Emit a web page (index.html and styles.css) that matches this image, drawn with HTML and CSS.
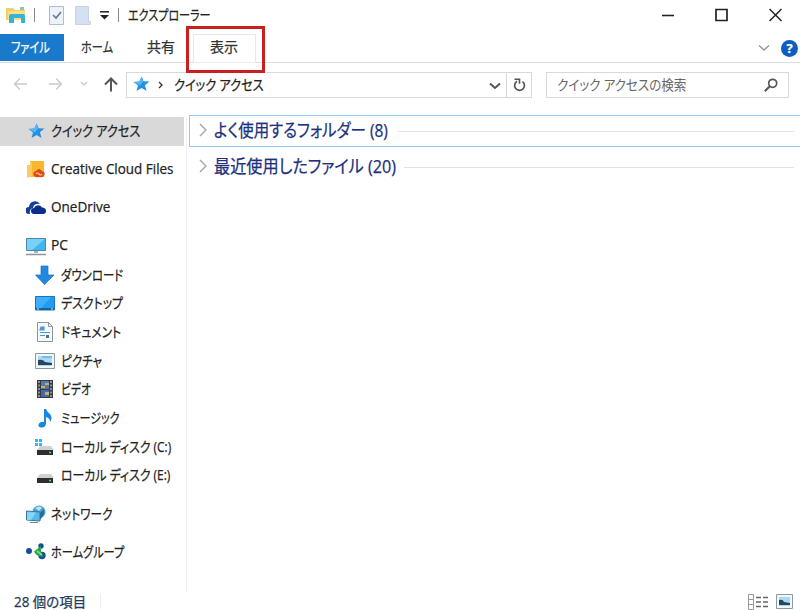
FILE: index.html
```
<!DOCTYPE html>
<html lang="ja">
<head>
    <meta charset="UTF-8">
    <meta name="viewport" content="width=device-width, initial-scale=1.0">
    <title>エクスプローラー</title>
    <link rel="stylesheet" href="styles.css">
</head>
<body>
    <div class="window">
        <!-- title bar -->
        <header class="titlebar">
            <svg class="app-icon" width="21" height="18" viewBox="0 0 21 18">
                <path d="M0 2h7l2 2h10v10H0z" fill="#f3cf68"/>
                <path d="M2 5h17v9H2z" fill="#fbe08a"/>
                <path d="M3 17V10q0-2 2-2h12q2 0 2 2v7h-4v-5H8v5z" fill="#35b3d8"/>
                <path d="M14 1h4v3h-4z" fill="#8fc79a"/>
            </svg>
            <i class="sep"></i>
            <svg class="qa-check" width="15" height="19" viewBox="0 0 15 19">
                <path d="M.5.5h14v18H.5z" fill="#edf2fa" stroke="#aebbd0"/>
                <path d="M4 9l3 3 5-6" fill="none" stroke="#68758c" stroke-width="1.6"/>
            </svg>
            <svg class="qa-new" width="16" height="19" viewBox="0 0 16 19">
                <path d="M.5.5h13v15h2v3H.5z" fill="#d5e0f3" stroke="#c6d2e8"/>
            </svg>
            <svg class="qa-more" width="9" height="9" viewBox="0 0 9 9">
                <path d="M0 .8h9" stroke="#222" stroke-width="1.5"/>
                <path d="M0 4h9L4.500 8.500z" fill="#222"/>
            </svg>
            <i class="sep sep-title"></i>
            <h1><span class="fit fit-title">エクスプローラー</span></h1>
            <div class="controls">
                <svg width="12" height="14" viewBox="0 0 12 14"><path d="M0 7.500h12" stroke="#222" stroke-width="1.600"/></svg>
                <svg width="13" height="14" viewBox="0 0 13 14"><path d="M1 1.500h11v11H1z" fill="none" stroke="#222" stroke-width="1.700"/></svg>
                <svg width="13" height="14" viewBox="0 0 13 14"><path d="M.5 1l12 12M12.500 1l-12 12" stroke="#222" stroke-width="1.500"/></svg>
            </div>
        </header>

        <!-- ribbon tabs -->
        <nav class="tabs">
            <a class="tab tab-file"><span class="fit fit-file">ファイル</span></a>
            <a class="tab tab-home"><span class="fit fit-home">ホーム</span></a>
            <a class="tab tab-share">共有</a>
            <a class="tab tab-view">表示<i class="highlight"></i></a>
            <div class="tabs-end">
                <svg width="12" height="8" viewBox="0 0 12 8"><path d="M1 1.500l5 4.500 5-4.500" fill="none" stroke="#999" stroke-width="1.500"/></svg>
                <b class="help">?</b>
            </div>
        </nav>

        <!-- address + search -->
        <div class="navbar">
            <svg class="back" width="15" height="14" viewBox="0 0 15 14"><path d="M14 7H1.500M7 1.500L1.500 7 7 12.500" fill="none" stroke="#ccc" stroke-width="1.500"/></svg>
            <svg class="forward" width="15" height="14" viewBox="0 0 15 14"><path d="M1 7h12.500M8 1.500L13.500 7 8 12.500" fill="none" stroke="#ccc" stroke-width="1.500"/></svg>
            <svg class="recent" width="8" height="6" viewBox="0 0 8 6"><path d="M1 1l3 3 3-3" fill="none" stroke="#ccc" stroke-width="1.500"/></svg>
            <svg class="up" width="14" height="15" viewBox="0 0 14 15"><path d="M7 14.500V2M1 7.500L7 1.500l6 6" fill="none" stroke="#555" stroke-width="2"/></svg>
            <div class="address">
                <svg class="star" width="17" height="16" viewBox="0 0 17 16"><use href="#star"/></svg>
                <svg class="crumb" width="5" height="8" viewBox="0 0 5 8"><path d="M1 1l3 3-3 3" fill="none" stroke="#333" stroke-width="1.300"/></svg>
                <span class="fit fit-crumb">クイック アクセス</span>
                <svg class="drop" width="12" height="8" viewBox="0 0 12 8"><path d="M1 1.500l5 4.500 5-4.500" fill="none" stroke="#555" stroke-width="2"/></svg>
                <div class="refresh">
                    <svg width="13" height="14" viewBox="0 0 13 14">
                        <path d="M9.500 3.600A4.900 4.900 0 1 1 4 3.300" fill="none" stroke="#555" stroke-width="1.700"/>
                        <path d="M1.500 1.300h5v4.500" fill="none" stroke="#555" stroke-width="1.600"/>
                    </svg>
                </div>
            </div>
            <div class="search">
                <span class="fit fit-search">クイック アクセスの検索</span>
                <svg width="14" height="14" viewBox="0 0 14 14">
                    <circle cx="8.700" cy="5.300" r="4" fill="none" stroke="#555" stroke-width="1.700"/>
                    <path d="M5.800 8.200L.8 13.200" stroke="#555" stroke-width="2"/>
                </svg>
            </div>
        </div>

        <main>
            <ul class="tree">
                <li class="selected">
                    <svg viewBox="0 0 20 20"><use href="#star" x="2" y="2"/></svg>
                    <span class="fit fit-quick">クイック アクセス</span>
                </li>
                <li class="group">
                    <svg viewBox="0 0 20 20">
                        <path d="M4 1h14v16H1V5h3z" fill="#fbb72c"/>
                        <path d="M1 5h3V1l2 1v14l-5 2z" fill="#f9cb62"/>
                        <path d="M8 16q-2-4 2-5 3-4 6 0 4 1 2 5-2 2-5 1-3 1-5-1z" fill="#dd4b19"/>
                        <path d="M10 14q1-2 3 0t3 0" fill="none" stroke="#ffc68d" stroke-width="1.200"/>
                    </svg>
                    <span class="fit fit-cloud">Creative Cloud Files</span>
                </li>
                <li class="group">
                    <svg viewBox="0 0 20 20">
                        <path d="M3 16a3.500 3.500 0 0 1 0-7 6 6 0 0 1 11-3q-6-1-7 4-4 1-3 6z" fill="#153f9b"/>
                        <path d="M8 16a3 3 0 0 1 0-6 4.500 4.500 0 0 1 8-.5q4 0 4 3.500 0 3-3 3z" fill="#0b2f88"/>
                    </svg>
                    <span class="fit fit-onedrive">OneDrive</span>
                </li>
                <li class="group">
                    <svg viewBox="0 0 20 20">
                        <path d="M.5 2.500h19v12H.5z" fill="#43b4ee" stroke="#4c87a6"/>
                        <path d="M1 3h18L6 14H1z" fill="#79d0fa"/>
                        <path d="M8 15h4v2H8z" fill="#a9b5bd"/>
                        <path d="M0 18.500h20" stroke="#8796a2" stroke-width="1.500"/>
                    </svg>
                    <span class="fit fit-pc">PC</span>
                </li>
                <li class="child">
                    <svg viewBox="0 0 20 20"><path d="M6 1h7v9h6l-9.500 9.500L.5 10H6z" fill="#2089df" stroke="#1770bd" stroke-width=".7"/></svg>
                    <span class="fit fit-download">ダウンロード</span>
                </li>
                <li class="child">
                    <svg viewBox="0 0 20 20">
                        <path d="M.5 3.500h19v13.500H.5z" fill="#259bee" stroke="#1674b8"/>
                        <path d="M1 4h15L6 15H1z" fill="#3eafff"/>
                        <path d="M1 16h18" stroke="#0d568f" stroke-width="1.500"/>
                        <path d="M2 16h2M16 16h2" stroke="#cdeaff"/>
                    </svg>
                    <span class="fit fit-desktop">デスクトップ</span>
                </li>
                <li class="child">
                    <svg viewBox="0 0 20 20">
                        <path d="M2.500.5h11l4 4v15h-15z" fill="#f5f9fb" stroke="#8b969d"/>
                        <path d="M13.500.5v4h4" fill="none" stroke="#8b969d"/>
                        <path d="M6 5h3v3H5zM5 10.500h10M5 13.500h5" fill="#4b9acb" stroke="#4b9acb" stroke-width="1.200"/>
                        <path d="M11 13h3v3h-3z" fill="#59717e"/>
                    </svg>
                    <span class="fit fit-document">ドキュメント</span>
                </li>
                <li class="child">
                    <svg viewBox="0 0 20 20"><use href="#picture"/></svg>
                    <span class="fit fit-picture">ピクチャ</span>
                </li>
                <li class="child">
                    <svg viewBox="0 0 20 20">
                        <path d="M2 1h16v18H2z" fill="#333b44"/>
                        <path d="M6 2h8v8H6z" fill="#5279b4"/>
                        <path d="M6 11h8v7H6z" fill="#4568a8"/>
                        <path d="M6 7h4v2H6zM10 13h4v3h-4zM10 4h4v2h-4z" fill="#d6ac49"/>
                        <path d="M4 2v17M16 2v17" stroke="#aab0b4" stroke-width="1.500" stroke-dasharray="2 1.500"/>
                    </svg>
                    <span class="fit fit-video">ビデオ</span>
                </li>
                <li class="child">
                    <svg viewBox="0 0 20 20">
                        <path d="M9 1h2q1 3 4 5 3 4 0 8 0-4-4-5v7q-1 4-5 3.500-4-1-2-4 2-2.500 5-1.500z" fill="#1688df"/>
                    </svg>
                    <span class="fit fit-music">ミュージック</span>
                </li>
                <li class="child">
                    <svg viewBox="0 0 20 20">
                        <path d="M0 2h3v3H0zM4 2h3v3H4zM0 6h3v3H0zM4 6h3v3H4z" fill="#35b6ef"/>
                        <use href="#drive"/>
                    </svg>
                    <span class="fit fit-disk">ローカル ディスク (C:)</span>
                </li>
                <li class="child">
                    <svg viewBox="0 0 20 20"><use href="#drive"/></svg>
                    <span class="fit fit-disk">ローカル ディスク (E:)</span>
                </li>
                <li class="group">
                    <svg viewBox="0 0 20 20">
                        <circle cx="13" cy="8" r="6.500" fill="#4b9fce"/>
                        <path d="M9 4q5-3 7 0l-3 3z" fill="#bce4f3"/>
                        <path d="M.5 7l13.500 1v9L.5 16z" fill="#55b9ea" stroke="#317b9f"/>
                        <path d="M1 8l9 .5L5 16H1z" fill="#88d5f4"/>
                        <path d="M14 9l4-4v5l-4 6z" fill="#2b6c92"/>
                        <path d="M4 18.500h8" stroke="#71899a"/>
                    </svg>
                    <span class="fit fit-network">ネットワーク</span>
                </li>
                <li class="group">
                    <svg viewBox="0 0 20 20">
                        <circle cx="3" cy="9" r="3" fill="#174aa0"/>
                        <circle cx="15" cy="4" r="2.700" fill="#164e9a"/>
                        <circle cx="16" cy="13.500" r="3.700" fill="#174f9c"/>
                        <path d="M8 9.500L15 4v5.500l2 5q-7 0-9-5z" fill="#24a846"/>
                        <path d="M11 9l5 4" stroke="#7ddb7e" stroke-width="1.800"/>
                    </svg>
                    <span class="fit fit-homegroup">ホームグループ</span>
                </li>
            </ul>

            <section class="content">
                <div class="section active">
                    <svg width="8" height="14" viewBox="0 0 8 14"><path d="M1 1l6 6-6 6" fill="none" stroke="#aaa" stroke-width="1.500"/></svg>
                    <h2 class="often"><span class="fit fit-often">よく使用するフォルダー (8)</span></h2>
                    <hr>
                </div>
                <div class="section">
                    <svg width="8" height="14" viewBox="0 0 8 14"><path d="M1 1l6 6-6 6" fill="none" stroke="#aaa" stroke-width="1.500"/></svg>
                    <h2 class="latest"><span class="fit fit-latest">最近使用したファイル (20)</span></h2>
                    <hr>
                </div>
            </section>
        </main>

        <footer>
            <span class="count"><span class="fit fit-count">28 個の項目</span></span>
            <svg class="details" width="20" height="16" viewBox="0 0 20 16">
                <path d="M.5.5h5v15h-5zM.5 5.500h5M.5 10.500h5" fill="#fff" stroke="#999"/>
                <path d="M8 3.500h12M8 8h12M8 12.500h12" stroke="#666" stroke-width="1.400" stroke-dasharray="5 2"/>
            </svg>
            <svg class="large" width="17" height="15" viewBox="0 0 17 15">
                <path d="M.5.5h16v14H.5z" fill="#f2f7fa" stroke="#899aa5"/>
                <path d="M3 3h11v9H3z" fill="#a9d9f4"/>
                <path d="M3 6q4-1 5 2l6 1v2H3z" fill="#27465c"/>
            </svg>
        </footer>
    </div>

    <!-- shared icons -->
    <svg class="defs" width="0" height="0">
        <defs>
            <g id="star">
                <path d="M8.800.5l1.700 4.800 6 .2-4.600 3.700 1.700 5.800-5-3.100L3.500 15l1.500-5.500L.5 6l5.700-.5z" fill="#2490e4"/>
                <path d="M8.800.5l1.200 5L7 9.500.5 6l5.700-.5z" fill="#58b5f2"/>
            </g>
            <g id="picture">
                <path d="M.5 2.500h19v15H.5z" fill="#f2f7fa" stroke="#899aa5"/>
                <path d="M3 5h14v10H3z" fill="#a9d9f4"/>
                <path d="M3 9q5-1 7 2l7 1v2H3z" fill="#27465c"/>
                <path d="M7 6h10" stroke="#4c9dde"/>
            </g>
            <g id="drive">
                <path d="M5 9h11l3 4H2z" fill="#d0d1d1"/>
                <path d="M2 13h16v5H2z" fill="#2b2f31"/>
                <path d="M14 15.500h2" stroke="#67d36a" stroke-width="1.500"/>
            </g>
        </defs>
    </svg>
</body>
</html>
```
FILE: styles.css
```
* {
    box-sizing: border-box;
}

body {
    margin: 0;
    background: #fff;
    color: #222;
    font-family: "Open Sans", "Noto Sans CJK JP", sans-serif;
    font-size: 14px;
    -webkit-text-stroke: .25px;
    overflow: hidden;
}

svg {
    display: block;
    flex: none;
}

h1, h2, ul, hr {
    margin: 0;
    padding: 0;
    font-weight: normal;
}

.window {
    width: 800px;
    height: 610px;
    display: flex;
    flex-direction: column;
}

.defs {
    position: absolute;
}

.fit {
    display: inline-block;
    white-space: nowrap;
    font-feature-settings: "palt";
    transform-origin: left center;
}

.fit-title { transform: scaleX(.79); }
.fit-file { transform: scaleX(.8); }
.fit-home { transform: scaleX(.8); }
.fit-crumb { transform: scaleX(.87); }
.fit-search { transform: scaleX(.895); }
.fit-quick { transform: scaleX(.868); }
.fit-cloud { transform: scaleX(.96); }
.fit-onedrive { transform: scaleX(.965); }
.fit-pc { transform: scaleX(.98); }
.fit-download { transform: scaleX(.815); }
.fit-desktop { transform: scaleX(.85); }
.fit-document { transform: scaleX(.84); }
.fit-picture { transform: scaleX(.825); }
.fit-video { transform: scaleX(.77); }
.fit-music { transform: scaleX(.79); }
.fit-disk { transform: scaleX(.85); }
.fit-network { transform: scaleX(.83); }
.fit-homegroup { transform: scaleX(.8); }
.fit-often { transform: scaleX(.86); }
.fit-latest { transform: scaleX(.898); }
.fit-count { transform: scaleX(.96); }

/* title bar */
.titlebar {
    height: 34px;
    padding: 0 18px 4px 6px;
    display: flex;
    align-items: center;
}

.sep {
    width: 1px;
    height: 14px;
    margin-left: 7px;
    background: #888;
}

.qa-check { margin-left: 14px; }
.qa-new { margin-left: 11px; }
.qa-more { margin-left: 9px; }
.sep-title { margin-left: 9px; }

h1 {
    margin-left: 9px;
    font-size: 14px;
    line-height: 20px;
}

.controls {
    display: flex;
    gap: 41px;
    margin-left: auto;
}

/* tabs */
.tabs {
    height: 29px;
    display: flex;
    border-bottom: 1px solid #ddd;
}

.tab {
    height: 28px;
    line-height: 26px;
    color: #333;
}

.tab-file {
    width: 64px;
    height: 27px;
    padding-left: 11px;
    background: #1979ca;
    color: #fff;
}

.tab-home {
    width: 83px;
    padding-left: 17px;
}

.tab-share { width: 46px; }

.tab-view {
    position: relative;
    width: 63px;
    height: 29px;
    padding-left: 16px;
    border: 1px solid #e8e8e8;
    border-bottom-color: #eee;
    line-height: 24px;
}

.highlight {
    position: absolute;
    left: -8px;
    top: -9px;
    width: 79px;
    height: 47px;
    border: 3px solid #c9201f;
}

.tabs-end {
    display: flex;
    align-items: center;
    gap: 11px;
    margin-left: auto;
    margin-right: 2px;
}

.help {
    width: 17px;
    height: 17px;
    border-radius: 50%;
    background: #0b5fc0;
    color: #fff;
    font-size: 13px;
    line-height: 17px;
    text-align: center;
}

/* address row */
.navbar {
    height: 54px;
    padding: 9px 11px 0 13px;
    display: flex;
    align-items: flex-start;
}

.back { margin-top: 5px; }
.forward { margin: 5px 0 0 20px; }
.recent { margin: 9px 0 0 17px; }
.up { margin: 5px 0 0 16px; }

.address {
    width: 407px;
    height: 26px;
    margin-left: 8px;
    padding-left: 6px;
    display: flex;
    align-items: center;
    border: 1px solid #d9d9d9;
}

.address .fit,
.search .fit {
    margin-top: -2px;
}

.star { margin-top: -2px; }
.crumb { margin: 0 11px 0 8px; }
.drop { margin: 2px 5px 0 auto; }

.refresh {
    height: 24px;
    width: 25px;
    padding: 5px 0 0 6px;
    border-left: 1px solid #d9d9d9;
}

.search {
    width: 243px;
    height: 26px;
    margin-left: 14px;
    padding: 0 10px;
    display: flex;
    align-items: center;
    justify-content: space-between;
    border: 1px solid #d9d9d9;
    color: #666;
    -webkit-text-stroke: 0;
}

/* folder tree */
main {
    flex: 1;
    display: flex;
    min-height: 0;
}

.tree {
    width: 187px;
    height: 476px;
    flex: none;
    list-style: none;
    border-right: 1px solid #f0f0f0;
}

.tree li {
    height: 28.7px;
    padding-left: 26px;
    display: flex;
    align-items: center;
}

.tree svg {
    width: 20px;
    height: 20px;
    margin-right: 5px;
}

.tree .fit { margin-top: -2px; }

.tree .selected {
    width: 184px;
    background: #d9d9d9;
}

.tree .group { margin-top: 9.5px; }

.tree .child {
    padding-left: 35px;
}

.tree .child svg { margin-right: 6px; }

/* right side */
.content {
    flex: 1;
    margin-left: 2px;
    margin-top: -2px;
}

.section {
    height: 32px;
    margin-bottom: 4px;
    padding-left: 9px;
    display: flex;
    align-items: center;
    border: 1px solid transparent;
    border-right: 0;
}

.section svg { margin-top: -2px; }

.section.active {
    border-color: #8fcdf0;
}

h2 {
    margin-left: 7px;
    margin-top: -2px;
    color: #20307d;
    font-size: 18px;
    line-height: 26px;
}

.often { width: 184px; }
.latest { width: 190px; }

.section hr {
    flex: 1;
    height: 1px;
    border: 0;
    background: #e2e2e2;
    margin-right: 6px;
}

/* status bar */
footer {
    height: 17px;
    padding: 0 7px 0 14px;
    display: flex;
    align-items: center;
    color: #24395c;
}

.count {
    width: 87px;
    height: 15px;
    line-height: 15px;
    border-right: 1px solid #eee;
}

.details { margin-left: auto; }
.large { margin-left: 8px; }
```
